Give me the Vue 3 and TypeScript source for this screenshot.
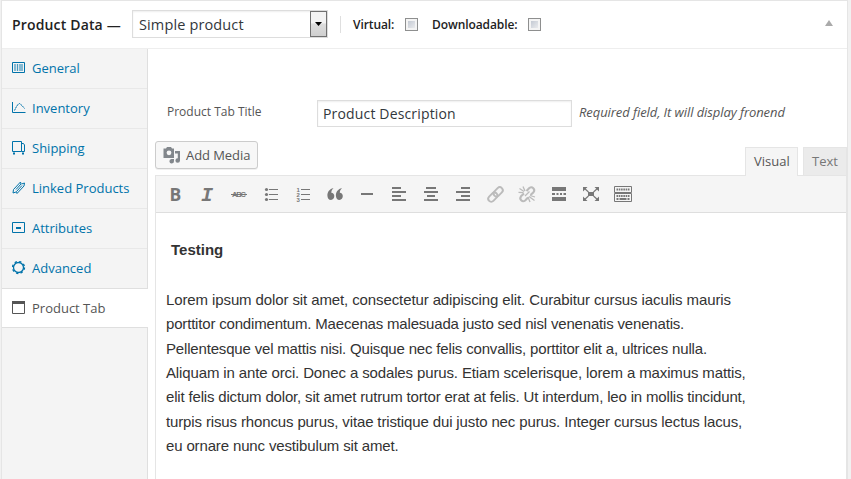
<script setup lang="ts">
import { ref } from 'vue'

interface Tab {
  id: string
  label: string
}

interface Line {
  text: string
  tracking: number
}

const tabs: Tab[] = [
  { id: 'general', label: 'General' },
  { id: 'inventory', label: 'Inventory' },
  { id: 'shipping', label: 'Shipping' },
  { id: 'linked', label: 'Linked Products' },
  { id: 'attributes', label: 'Attributes' },
  { id: 'advanced', label: 'Advanced' },
  { id: 'custom', label: 'Product Tab' },
]

const tools: string[] = [
  'bold', 'italic', 'strike', 'bullets', 'numbers', 'quote', 'rule',
  'left', 'center', 'right', 'link', 'unlink', 'more', 'expand', 'keyboard',
]

const lines: Line[] = [
  { text: 'Lorem ipsum dolor sit amet, consectetur adipiscing elit. Curabitur cursus iaculis mauris', tracking: -0.108 },
  { text: 'porttitor condimentum. Maecenas malesuada justo sed nisl venenatis venenatis.', tracking: -0.18 },
  { text: 'Pellentesque vel mattis nisi. Quisque nec felis convallis, porttitor elit a, ultrices nulla.', tracking: -0.174 },
  { text: 'Aliquam in ante orci. Donec a sodales purus. Etiam scelerisque, lorem a maximus mattis,', tracking: -0.132 },
  { text: 'elit felis dictum dolor, sit amet rutrum tortor erat at felis. Ut interdum, leo in mollis tincidunt,', tracking: -0.173 },
  { text: 'turpis risus rhoncus purus, vitae tristique dui justo nec purus. Integer cursus lectus lacus,', tracking: -0.134 },
  { text: 'eu ornare nunc vestibulum sit amet.', tracking: -0.143 },
]

const active = ref('custom')
const title = ref('Product Description')
</script>

<template>
  <div class="box">
    <header class="head">
      <span class="head-title">Product Data —</span>
      <div class="select">
        <span class="select-value">Simple product</span>
        <span class="select-arrow"><svg width="7" height="4" viewBox="0 0 7 4"><path d="M0 0h7L3.5 4z" fill="#000" /></svg></span>
      </div>
      <span class="divider"></span>
      <span class="opt virtual">Virtual:</span>
      <span class="check"></span>
      <span class="opt download">Downloadable:</span>
      <span class="check"></span>
      <svg class="toggle" width="8" height="6" viewBox="0 0 8 6"><path d="M4 0l4 6H0z" fill="#aaa" /></svg>
    </header>

    <div class="body">
      <nav class="side">
        <a v-for="t in tabs" :key="t.id" class="tab" :class="[t.id, { active: active === t.id }]" @click="active = t.id">
          <svg class="tab-icon" width="14" height="14" viewBox="0 0 14 14" fill="none" stroke="currentColor">
            <g v-if="t.id === 'general'">
              <path d="M.5 1.5h12v10H.5z" />
              <path d="M3 3v7M5.5 3v7M8 3v7M10 3v7" stroke-width="1.3" opacity=".7" />
            </g>
            <g v-else-if="t.id === 'inventory'">
              <path d="M.5 1v10.500h13" />
              <path d="M2.500 9.500L5 4.500l2.500-2 2.500 2 2.500 3" stroke-dasharray="2 .5" />
            </g>
            <g v-else-if="t.id === 'shipping'">
              <path d="M.5.500h9v10h-9zM9.500 2.500h2l1 1.500v6.500h-3" />
              <path d="M1 12.500h2M10 12.500h2" stroke-width="2" />
            </g>
            <g v-else-if="t.id === 'linked'">
              <path d="M1 12l.5-3.500L8.500 1 9 3 4 8.500M1 12l3-1M12.500 2l-.5 3-7 7.500-.5-2L10 4.500M12.500 2l-3 1" />
            </g>
            <g v-else-if="t.id === 'attributes'">
              <path d="M.5 1.500h12v10H.5z" />
              <path d="M4 7h5" stroke-width="2" />
            </g>
            <g v-else-if="t.id === 'advanced'">
              <circle cx="6.500" cy="6.500" r="5" stroke-width="1.300" />
              <circle cx="6.500" cy="6.500" r="6" stroke-width="1.300" stroke-dasharray="2.300 2.412" />
            </g>
            <g v-else>
              <path d="M.5.500h12v12H.5z" />
              <path d="M0 1.500h13" stroke-width="3" />
            </g>
          </svg>
          <span class="tab-label">{{ t.label }}</span>
        </a>
      </nav>

      <main class="panel">
        <div class="field">
          <label class="field-label" for="tab-title">Product Tab Title</label>
          <input id="tab-title" v-model="title" class="field-input" type="text" />
          <span class="field-hint">Required field, It will display fronend</span>
        </div>

        <div class="bar">
          <button class="media" type="button">
            <svg width="18" height="18" viewBox="0 0 18 18" fill="#82878c">
              <path fill-rule="evenodd" d="M.5 2.500h2.500l1-1.500h4l1 1.500h2V12H.500zM6 4.400a2.400 2.400 0 1 0 0 4.800 2.400 2.400 0 0 0 0-4.800z" />
              <path d="M12 5h5v9.500a2.300 2.200 0 1 1-2.200-2.200V7.500H12zM8.500 13H11v2a2.300 2.200 0 1 1-2.500-2z" />
            </svg>
            <span class="media-label">Add Media</span>
          </button>
          <div class="modes">
            <span class="mode visual"><span>Visual</span></span>
            <span class="mode text"><span>Text</span></span>
          </div>
        </div>

        <section class="editor">
          <div class="toolbar">
            <span v-for="k in tools" :key="k" class="tool">
              <svg width="32" height="32" viewBox="-6 -6 32 32" fill="#777">
                <text v-if="k === 'bold'" x="4.500" y="17" class="g-bold">B</text>
                <text v-else-if="k === 'italic'" x="4" y="17" class="g-italic">I</text>
                <g v-else-if="k === 'strike'">
                  <text x="3" y="13" class="g-strike" textLength="14">ABC</text>
                  <path d="M2 10h16v1H2z" />
                </g>
                <g v-else-if="k === 'bullets'">
                  <circle cx="5.500" cy="5.500" r="1.600" /><circle cx="5.500" cy="10.500" r="1.600" /><circle cx="5.500" cy="15.500" r="1.600" />
                  <path d="M8 5h9v1H8zM8 10h9v1H8zM8 15h9v1H8z" />
                </g>
                <g v-else-if="k === 'numbers'">
                  <text x="3.500" y="7.500" class="g-num">1</text>
                  <text x="3.500" y="12.500" class="g-num">2</text>
                  <text x="3.500" y="17.500" class="g-num">3</text>
                  <path d="M8 5h9v1H8zM8 10h9v1H8zM8 15h9v1H8z" />
                </g>
                <path v-else-if="k === 'quote'" d="M8.500 4C7 5.500 6.300 7 6.300 8.700c1.800.2 3 1.500 3 3.400S7.900 16 6 16c-2.300 0-3.600-1.900-3.600-4.500C2.400 8 4.500 5 8.500 4zM17 4c-1.500 1.500-2.200 3-2.200 4.700 1.800.2 3 1.500 3 3.400S16.400 16 14.500 16c-2.300 0-3.600-1.900-3.600-4.500 0-3.500 2.100-6.500 6.100-7.500z" />
                <path v-else-if="k === 'rule'" d="M4 9h12v2H4z" />
                <path v-else-if="k === 'left'" d="M3 3h9v2H3zM3 7h14v2H3zM3 11h9v2H3zM3 15h14v2H3z" />
                <path v-else-if="k === 'center'" d="M5 3h10v2H5zM3 7h14v2H3zM6 11h8v2H6zM3 15h14v2H3z" />
                <path v-else-if="k === 'right'" d="M8 3h9v2H8zM3 7h14v2H3zM8 11h9v2H8zM3 15h14v2H3z" />
                <g v-else-if="k === 'link'" fill="none" stroke="#bbb" stroke-width="1.900" transform="rotate(-45 10.500 10.500)">
                  <rect x="1.500" y="7.500" width="10.500" height="6" rx="3" />
                  <rect x="9" y="7.500" width="10.500" height="6" rx="3" />
                </g>
                <g v-else-if="k === 'unlink'" fill="none" stroke="#bbb">
                  <path d="M9.500 7l2.800-3q2.200-1.600 4 .2t.2 4L13.500 11M7 9.500L4 12.300q-1.600 2.200.2 4t4 .2L11 13.500" stroke-width="2.100" />
                  <path d="M2.500 4.500l4.500 3M6 2.500l2 4.500M1.500 8.300l5 .4M12 12.500l5.500 4M13 11.500l5 1.500M11 13l2 5M8 12l4.500-4.500" stroke-width="1.300" />
                </g>
                <path v-else-if="k === 'more'" d="M3 3h14v4H3zM3 9h3v2H3zM7.500 9h2v2h-2zM11 9h2v2h-2zM14.500 9H17v2h-2.500zM3 13h14v4H3z" />
                <g v-else-if="k === 'expand'">
                  <path d="M7 8h6v4H7zM2 3h4.500L2 7.500zM18 3h-4.500L18 7.500zM2 17h4.500L2 12.500zM18 17h-4.500l4.500-4.500z" />
                  <path d="M3 4l4.500 4M17 4l-4.500 4M3 16l4.500-4M17 16l-4.500-4" stroke="#777" stroke-width="1.200" />
                </g>
                <g v-else>
                  <path d="M1.500 2.500h17v6h-17zM1.500 9.500h17v8h-17z" fill="none" stroke="#777" />
                  <path d="M3.500 5.500h13M3.500 12h13" stroke="#777" stroke-width="2" stroke-dasharray="1.600 .68" />
                  <path d="M3.500 15h2M6.500 15h7M14.500 15h2" stroke="#777" stroke-width="2" />
                </g>
              </svg>
            </span>
          </div>
          <div class="content">
            <h4 class="content-title">Testing</h4>
            <p class="copy">
              <span v-for="l in lines" :key="l.text" class="line" :style="{ letterSpacing: l.tracking + 'px' }">{{ l.text }}</span>
            </p>
          </div>
        </section>
      </main>
    </div>
  </div>
</template>

<style>
body {
  background: #f1f1f1;
  overflow: hidden;
}
</style>

<style scoped>
* {
  box-sizing: border-box;
}
.box {
  width: 847px;
  height: 479px;
  margin-left: 1px;
  border: 1px solid #e5e5e5;
  border-bottom: 0;
  background: #fff;
  font-family: 'Open Sans', sans-serif;
  font-size: 13px;
  color: #555;
  overflow: hidden;
  white-space: nowrap;
  display: flex;
  flex-direction: column;
}
.head {
  height: 48px;
  flex: none;
  border-bottom: 1px solid #eee;
  display: flex;
  align-items: center;
  padding-left: 10px;
  color: #222;
}
.head-title {
  width: 120px;
  padding-bottom: 1px;
  font-size: 14px;
  font-weight: 600;
  letter-spacing: 0.16px;
}
.select {
  width: 196px;
  height: 28px;
  margin-top: -1px;
  border: 1px solid #ddd;
  box-shadow: inset 0 1px 2px rgba(0, 0, 0, 0.07);
  display: flex;
  justify-content: space-between;
  line-height: 27px;
  color: #32373c;
}
.select-value {
  padding-left: 6px;
  font-size: 14.500px;
  letter-spacing: 0.13px;
}
.select-arrow {
  width: 17px;
  height: 26px;
  border: 1px solid #707070;
  background: linear-gradient(#f3f3f3 0 45%, #ddd 50%, #cfcfcf);
  display: flex;
  align-items: center;
  justify-content: center;
}
.divider {
  width: 1px;
  height: 17px;
  margin-left: 12px;
  background: #dfdfdf;
}
.opt {
  font-size: 12px;
  font-weight: 600;
  letter-spacing: -0.09px;
}
.virtual {
  width: 52px;
  margin-left: 12px;
}
.download {
  width: 96px;
  margin-left: 14px;
}
.check {
  width: 13px;
  height: 13px;
  margin-bottom: 1px;
  border: 1px solid #8e8f8f;
  background: linear-gradient(135deg, #b9c0cc, #f4f4f4);
  box-shadow: inset 0 0 0 2px #f4f4f4;
}
.toggle {
  margin: 0 14px 3px auto;
}
.body {
  flex: 1;
  display: flex;
}
.side {
  width: 146px;
  background: #f4f4f4;
  border-right: 1px solid #dfdfdf;
}
.tab {
  height: 40px;
  padding: 0 0 2px 10px;
  border-bottom: 1px solid #e8e8e8;
  display: flex;
  align-items: center;
  color: #0073aa;
}
.tab.advanced {
  border-bottom-color: #dfdfdf;
}
.tab.active {
  height: 39px;
  margin-right: -1px;
  padding-bottom: 0;
  background: #fff;
  border-bottom-color: #dfdfdf;
  color: #555;
}
.tab-icon {
  margin-right: 6px;
}
.panel {
  flex: 1;
  padding-left: 7px;
}
.field {
  height: 92px;
  padding: 51px 0 0 12px;
  display: flex;
  align-items: flex-start;
}
.field-label {
  width: 150px;
  font-size: 12px;
  line-height: 24px;
}
.field-input {
  width: 255px;
  height: 27px;
  padding: 0 5px 1px;
  border: 1px solid #ddd;
  box-shadow: inset 0 1px 2px rgba(0, 0, 0, 0.07);
  font: 14px 'Open Sans', sans-serif;
  letter-spacing: 0.16px;
  color: #32373c;
}
.field-hint {
  margin-left: 7px;
  font-size: 13px;
  font-style: italic;
  line-height: 24px;
  letter-spacing: -0.08px;
}
.bar {
  height: 34px;
  display: flex;
  align-items: flex-start;
}
.media {
  width: 103px;
  height: 28px;
  padding: 0 0 0 7px;
  border: 1px solid #ccc;
  border-radius: 3px;
  background: #f7f7f7;
  box-shadow: 0 1px 0 rgba(0, 0, 0, 0.06);
  display: flex;
  align-items: center;
  gap: 5px;
  font: 13px 'Open Sans', sans-serif;
  letter-spacing: -0.07px;
  color: #555;
}
.modes {
  margin: 6px 0 0 auto;
  display: flex;
  gap: 5px;
}
.mode {
  height: 28px;
  border: 1px solid #e5e5e5;
  border-bottom: 0;
  padding-left: 8px;
  line-height: 27px;
}
.visual {
  width: 53px;
  height: 29px;
  background: #f5f5f5;
  position: relative;
  z-index: 1;
}
.text {
  width: 44px;
  background: #ebebeb;
  color: #777;
}
.editor {
  height: 310px;
  border: 1px solid #e5e5e5;
}
.toolbar {
  height: 37px;
  padding-left: 3px;
  background: #f5f5f5;
  border-bottom: 1px solid #dedede;
  display: flex;
  align-items: center;
}
.tool {
  width: 32px;
  height: 32px;
  display: flex;
}
.g-bold {
  font: bold 17.500px 'Open Sans', sans-serif;
}
.g-italic {
  font: italic bold 20px 'Liberation Mono', monospace;
}
.g-strike {
  font: bold 7.500px 'Liberation Sans', sans-serif;
}
.g-num {
  font: bold 6px 'Liberation Sans', sans-serif;
}
.content {
  padding: 25px 0 0 10px;
  font-family: 'Liberation Sans', Arial, sans-serif;
  font-size: 15px;
  line-height: 24.400px;
  color: #333;
}
.content-title {
  margin: 0 0 25.400px 5px;
  font-size: 15px;
}
.copy {
  margin: 0;
}
.line {
  display: block;
}
</style>
